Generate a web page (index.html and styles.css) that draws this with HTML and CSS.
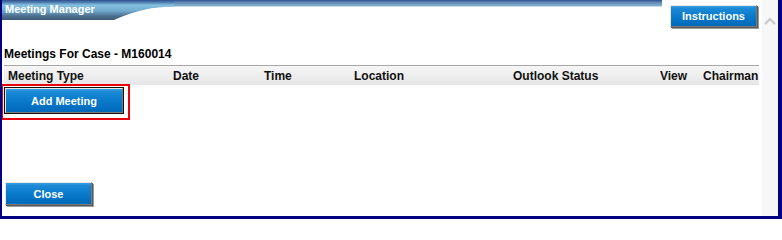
FILE: index.html
```html
<!DOCTYPE html>
<html>
<head>
<meta charset="utf-8">
<link rel="stylesheet" href="styles.css">
</head>
<body>
<div class="window">
  <div class="content">
    <div class="topbar">
      <svg class="swoosh" width="660" height="20" viewBox="0 0 660 20" preserveAspectRatio="none">
        <defs>
          <linearGradient id="bar" x1="0" y1="0" x2="0" y2="1">
            <stop offset="0" stop-color="#2c4f8f"/>
            <stop offset="0.12" stop-color="#4f7fb0"/>
            <stop offset="0.25" stop-color="#86c0e0"/>
            <stop offset="0.55" stop-color="#6fa9cc"/>
            <stop offset="0.8" stop-color="#4d6f8e"/>
            <stop offset="1" stop-color="#3c5a76"/>
          </linearGradient>
          <linearGradient id="strip" x1="0" y1="0" x2="0" y2="1">
            <stop offset="0" stop-color="#2c4f8f"/>
            <stop offset="0.35" stop-color="#5e88b2"/>
            <stop offset="1" stop-color="#8cb6cf"/>
          </linearGradient>
        </defs>
        <path d="M160 0 H660 V6.5 H160 Z" fill="url(#strip)"/>
        <path d="M0 0 H172 V6.5 C150 7 135 10 112 20 H0 Z" fill="url(#bar)"/>
      </svg>
      <span class="title">Meeting Manager</span>
      <button class="btn btn-instr">Instructions</button>
    </div>
    <h1 class="case">Meetings For Case - M160014</h1>
    <div class="grid-head">
      <span>Meeting Type</span>
      <span>Date</span>
      <span>Time</span>
      <span>Location</span>
      <span>Outlook Status</span>
      <span>View</span>
      <span>Chairman</span>
    </div>
    <div class="highlight">
      <button class="btn btn-add">Add Meeting</button>
    </div>
    <div class="footer">
      <button class="btn btn-close">Close</button>
    </div>
  </div>
  <div class="scrollbar">
    <svg width="14" height="10" viewBox="0 0 14 10"><path d="M2 8 L7 3 L12 8" fill="none" stroke="#c8c8c8" stroke-width="2.2"/></svg>
  </div>
</div>
</body>
</html>
```
FILE: styles.css
```css
html, body {
  margin: 0;
  padding: 0;
  background: #ffffff;
}
body {
  font-family: "Liberation Sans", Arial, sans-serif;
  font-size: 11px;
}
.window {
  width: 782px;
  height: 219px;
  box-sizing: border-box;
  border-left: 2px solid #000080;
  border-right: 4px solid #000080;
  border-bottom: 3px solid #000080;
  display: flex;
  overflow: hidden;
}
.content {
  flex: 1;
  display: flex;
  flex-direction: column;
  padding: 0 3px 0 2px;
}
.topbar {
  position: relative;
  height: 30px;
  display: flex;
  align-items: flex-start;
  justify-content: space-between;
  margin-left: -2px;
}
.swoosh {
  position: absolute;
  left: 0;
  top: 0;
}
.title {
  position: relative;
  color: #ffffff;
  font-weight: bold;
  font-size: 11px;
  line-height: 13px;
  padding: 3px 0 0 3px;
}
.btn {
  font-family: "Liberation Sans", Arial, sans-serif;
  font-weight: bold;
  font-size: 11px;
  color: #ffffff;
  background: linear-gradient(#3aa0e0 0, #1c8ad6 12%, #0a7acb 50%, #0069ba 100%);
  border: 1px solid;
  border-color: #e8e8e8 #7a7a7a #7a7a7a #e8e8e8;
  box-shadow: 1px 1px 0 #5a5a5a, 2px 2px 0 #9a9a9a;
  padding: 0;
  cursor: pointer;
}
.btn-instr {
  position: relative;
  width: 87px;
  height: 22px;
  margin-top: 5px;
  margin-right: 2px;
}
.case {
  margin: 17px 0 0 0;
  font-size: 12px;
  font-weight: bold;
  line-height: 14px;
  color: #000000;
}
.grid-head {
  margin: 4px 0 0 0;
  height: 19px;
  border-top: 1px solid #a8a8a8;
  background: linear-gradient(#f6f6f6, #e6e6e6);
  display: grid;
  grid-template-columns: 165px 91px 90px 159px 147px 43px 1fr;
  align-items: center;
  padding-left: 4px;
  font-weight: bold;
  font-size: 12px;
  color: #111111;
}
.highlight {
  align-self: flex-start;
  margin: -1px 0 0 -3px;
  border: 2px solid #e8000b;
  padding: 2px;
  width: 121px;
  height: 28px;
}
.btn-add {
  width: 118px;
  height: 25px;
  outline: 1px solid #111111;
  box-shadow: 1px 1px 0 #444444;
}
.footer {
  margin-top: auto;
  padding: 0 0 11px 1px;
}
.btn-close {
  width: 87px;
  height: 23px;
}
.scrollbar {
  width: 16px;
  background: #f7f7f7;
  display: flex;
  justify-content: center;
  padding-top: 16px;
  box-sizing: border-box;
  align-items: flex-start;
}
```
